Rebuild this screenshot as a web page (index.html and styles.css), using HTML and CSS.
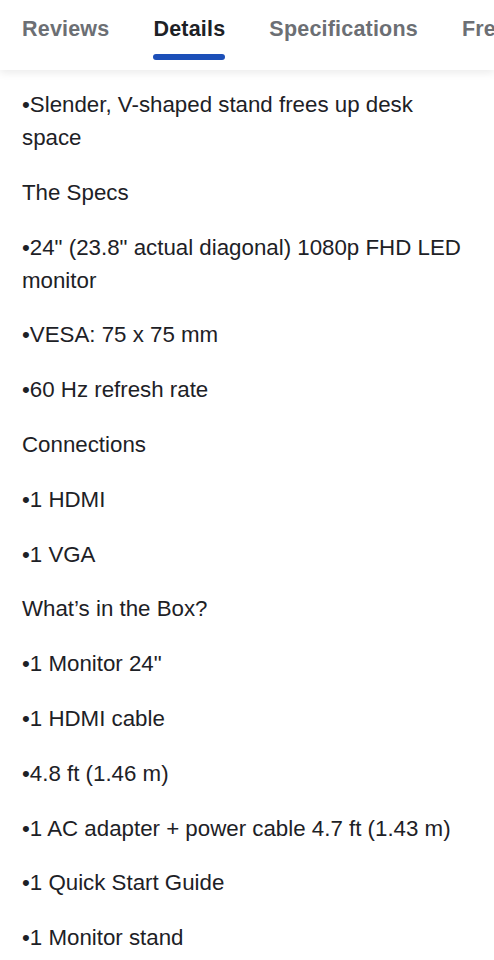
FILE: index.html
```html
<!DOCTYPE html>
<html>
<head>
<meta charset="utf-8">
<link rel="stylesheet" href="styles.css">
</head>
<body>
<nav class="tabs">
  <span class="tab">Reviews</span>
  <span class="tab active">Details</span>
  <span class="tab">Specifications</span>
  <span class="tab">Frequently Asked Questions</span>
</nav>
<main class="content">
  <p class="line">•Slender, V-shaped stand frees up desk space</p>
  <p class="line">The Specs</p>
  <p class="line">•24" (23.8" actual diagonal) 1080p FHD LED monitor</p>
  <p class="line">•VESA: 75 x 75 mm</p>
  <p class="line">•60 Hz refresh rate</p>
  <p class="line">Connections</p>
  <p class="line">•1 HDMI</p>
  <p class="line">•1 VGA</p>
  <p class="line">What’s in the Box?</p>
  <p class="line">•1 Monitor 24"</p>
  <p class="line">•1 HDMI cable</p>
  <p class="line">•4.8 ft (1.46 m)</p>
  <p class="line">•1 AC adapter + power cable 4.7 ft (1.43 m)</p>
  <p class="line">•1 Quick Start Guide</p>
  <p class="line">•1 Monitor stand</p>
</main>
</body>
</html>
```
FILE: styles.css
```css
html, body {
  margin: 0;
  padding: 0;
  background: #ffffff;
  overflow: hidden;
}
body {
  font-family: "Liberation Sans", Arial, sans-serif;
  color: #1d2126;
  width: 494px;
}
.tabs {
  display: flex;
  gap: 44px;
  padding: 0 0 0 22px;
  height: 70px;
  white-space: nowrap;
  overflow: hidden;
  box-shadow: 0 3px 8px rgba(0,0,0,0.08);
  position: relative;
  z-index: 1;
}
.tab {
  font-size: 21.5px;
  font-weight: 700;
  letter-spacing: 0.2px;
  color: #6c6f74;
  padding-top: 17px;
  position: relative;
  height: 55px;
  box-sizing: border-box;
}
.tab.active {
  color: #1d2126;
}
.tab.active::after {
  content: "";
  position: absolute;
  left: 0;
  right: 0;
  top: 54px;
  height: 6px;
  border-radius: 3px;
  background: #1c4fb8;
}
.content {
  padding: 18px 22px 0 22px;
}
.line {
  margin: 0 0 21.8px 0;
  font-size: 22.3px;
  line-height: 33px;
  max-width: 450px;
}
```
